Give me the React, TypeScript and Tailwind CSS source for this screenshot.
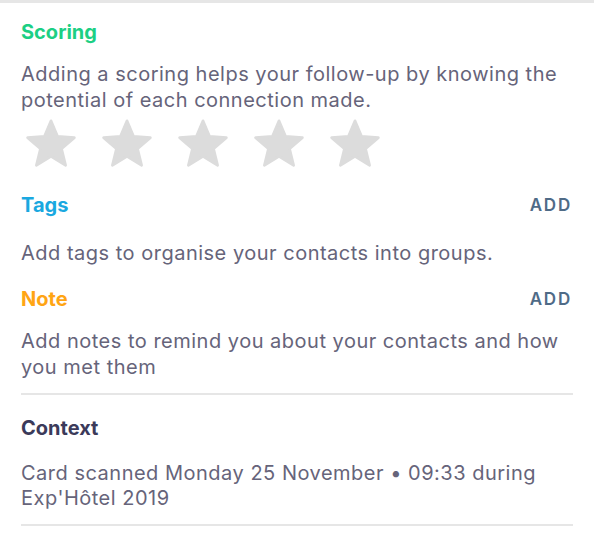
import React from "react";

const Star = () => (
  <svg width="54" height="52" viewBox="0 0 24 23" className="shrink-0">
    <path
      d="M12 1.2 L14.9 8.1 L22.4 8.7 L16.7 13.6 L18.5 21 L12 17 L5.5 21 L7.3 13.6 L1.6 8.7 L9.1 8.1 Z"
      fill="#dcdcdc"
      stroke="#dcdcdc"
      strokeWidth="1.2"
      strokeLinejoin="round"
    />
  </svg>
);

export default function App() {
  return (
    <div
      className="w-[594px] h-[546px] bg-white overflow-hidden border-t-[3px] border-[#e6e6e6] text-[20px] leading-[26px] text-[#66647a]"
      style={{ fontFamily: "Inter, 'Noto Sans', sans-serif" }}
    >
      <div className="px-[21px] pt-[16px]">
        <div className="font-bold text-[#1ccf84]">Scoring</div>
        <p className="mt-[16px] tracking-[0.5px]">
          Adding a scoring helps your follow-up by knowing the potential of each connection made.
        </p>
        <div className="flex gap-[22px] mt-[5px] ml-[3px]">
          <Star />
          <Star />
          <Star />
          <Star />
          <Star />
        </div>

        <div className="flex justify-between items-center mt-[22px]">
          <span className="font-bold text-[#1aa8e0]">Tags</span>
          <span className="text-[17px] font-semibold tracking-[1.8px] text-[#4f6b87] mr-[1px]">ADD</span>
        </div>
        <p className="mt-[22px] tracking-[0.5px]">Add tags to organise your contacts into groups.</p>

        <div className="flex justify-between items-center mt-[20px]">
          <span className="font-bold text-[#ffa514]">Note</span>
          <span className="text-[17px] font-semibold tracking-[1.8px] text-[#4f6b87] mr-[1px]">ADD</span>
        </div>
        <p className="mt-[16px] tracking-[0.5px]">
          Add notes to remind you about your contacts and how you met them
        </p>

        <div className="h-[2px] bg-[#e6e6e6] mt-[13px]" />

        <div className="font-bold text-[#3b3a5a] mt-[20px]">Context</div>
        <p className="mt-[20px] leading-[25px] tracking-[0.5px]">
          Card scanned Monday 25 November • 09:33 during Exp'Hôtel 2019
        </p>
        <div className="h-[2px] bg-[#e6e6e6] mt-[13px]" />
      </div>
    </div>
  );
}
